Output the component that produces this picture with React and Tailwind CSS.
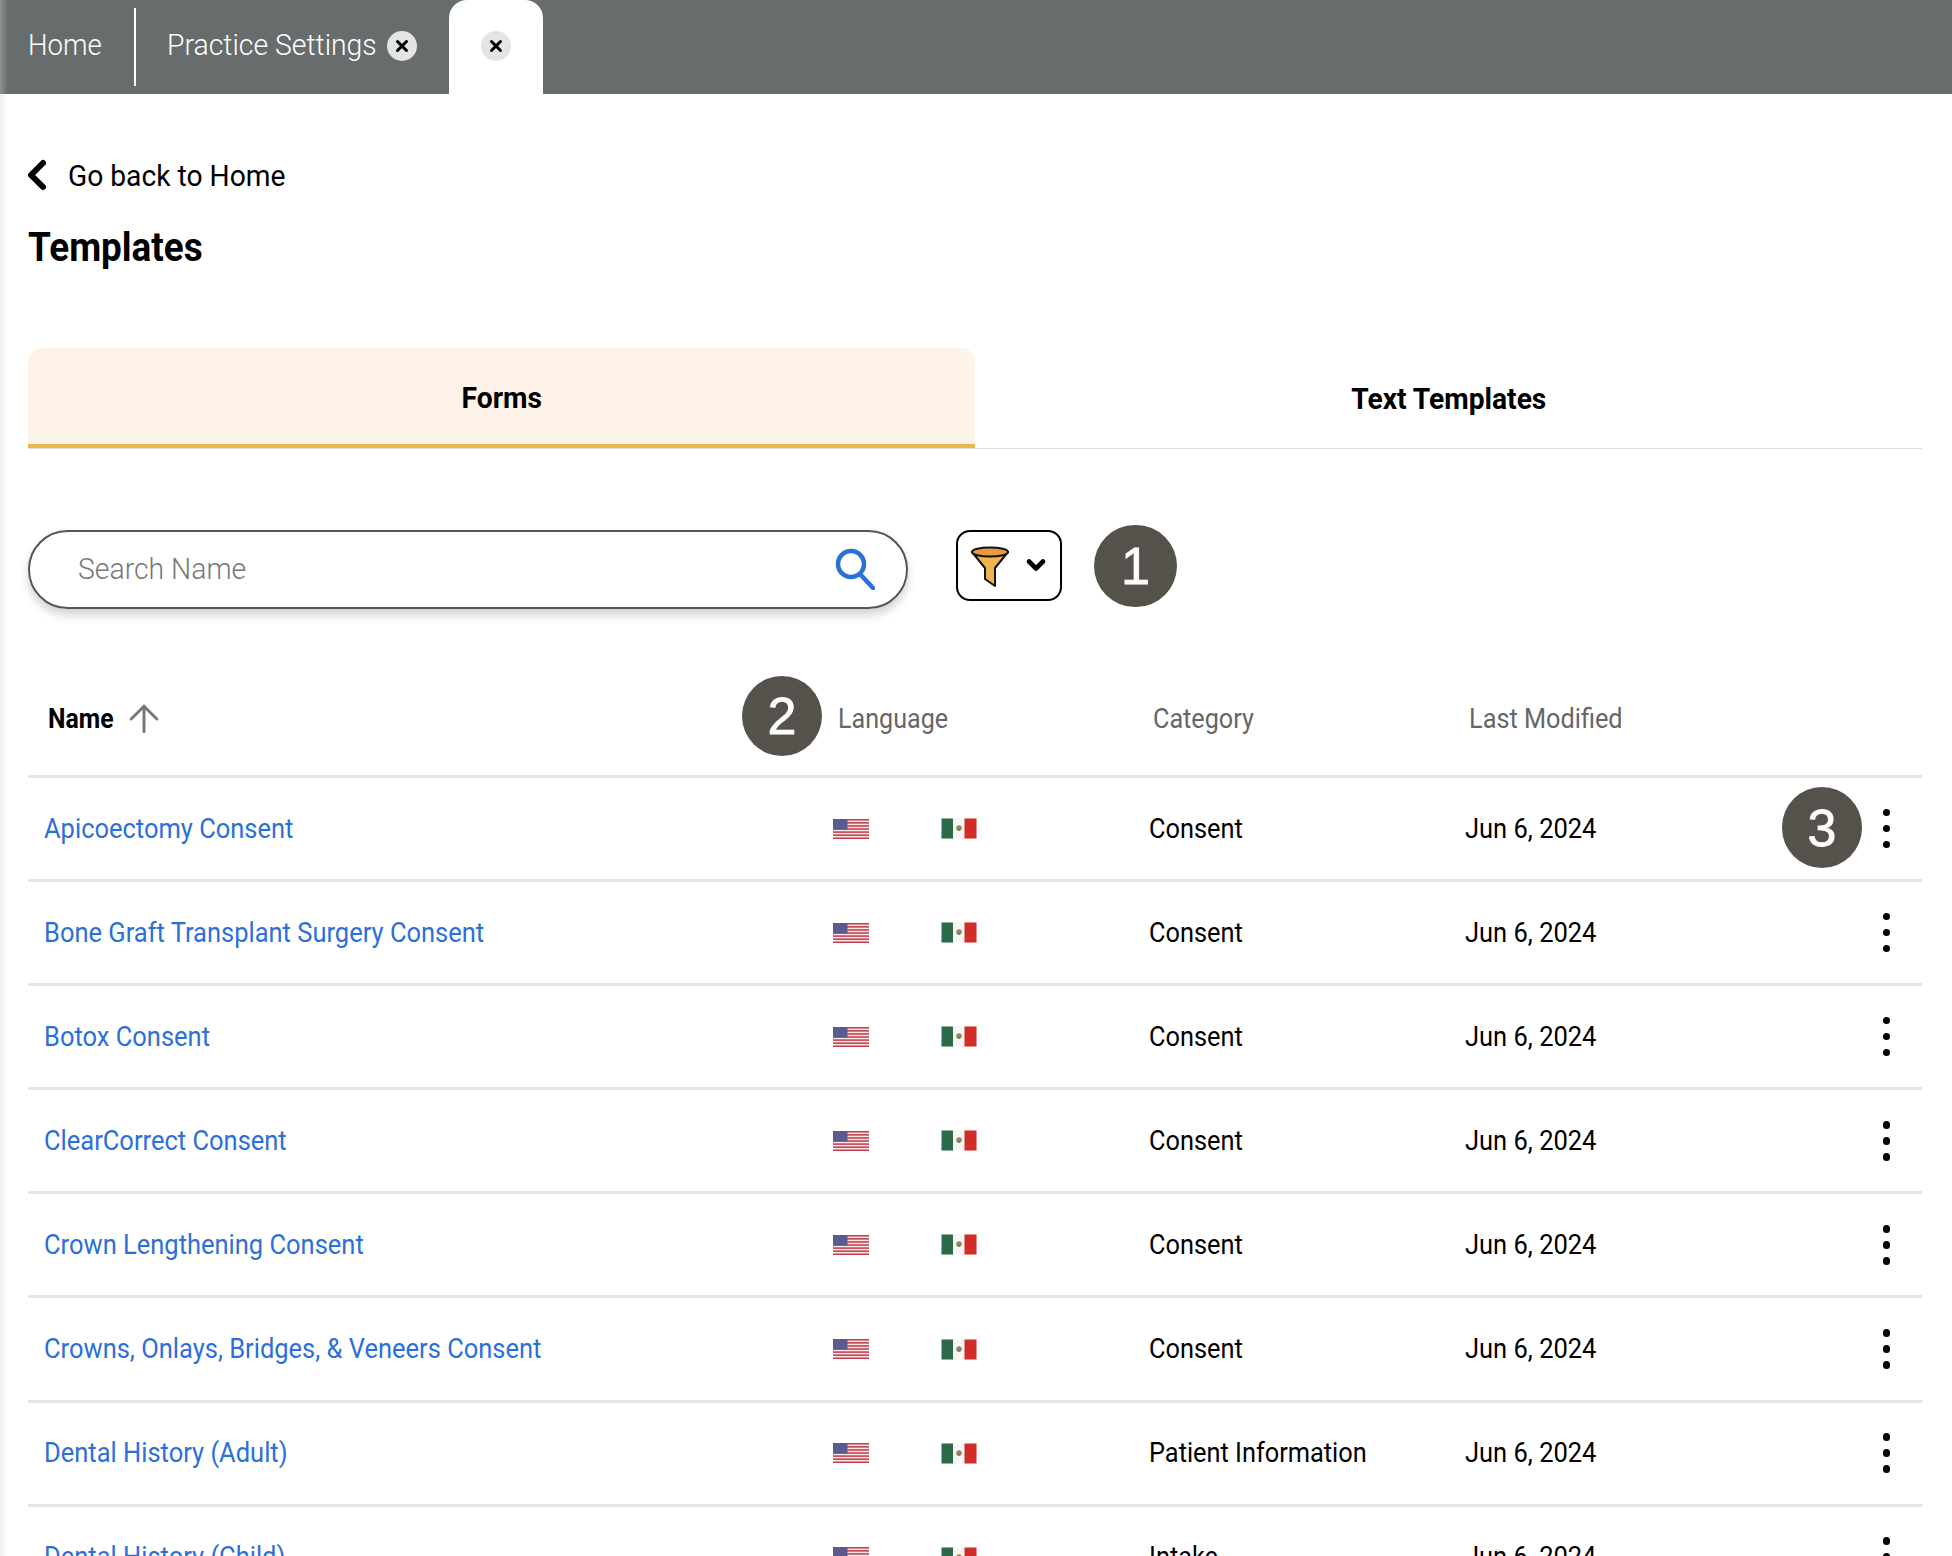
import { ArrowUp, ChevronDown, ChevronLeft, X } from "lucide-react";

const rows = [
  ["Apicoectomy Consent", "Consent"],
  ["Bone Graft Transplant Surgery Consent", "Consent"],
  ["Botox Consent", "Consent"],
  ["ClearCorrect Consent", "Consent"],
  ["Crown Lengthening Consent", "Consent"],
  ["Crowns, Onlays, Bridges, & Veneers Consent", "Consent"],
  ["Dental History (Adult)", "Patient Information"],
  ["Dental History (Child)", "Intake"],
];

const stripes = [0, 1, 2, 3, 4, 5, 6];

function UsFlag() {
  return (
    <svg width="36" height="20" viewBox="0 0 36 20">
      <rect width="36" height="20" fill="#f4e4e6" />
      {stripes.map((s) => (
        <rect key={s} y={s * 3.08} width="36" height="1.54" fill="#c2414f" />
      ))}
      <rect width="14.5" height="10.5" fill="#5a5a90" />
    </svg>
  );
}

function MxFlag() {
  return (
    <svg width="36" height="21" viewBox="0 0 36 21">
      <rect width="36" height="21" fill="#f7f7f7" />
      <rect x="0.5" y="0.5" width="11.5" height="20" fill="#2c6b47" />
      <rect x="23.5" y="0.5" width="12" height="20" fill="#d12c27" />
      <circle cx="18" cy="10" r="2.8" fill="#a8825a" />
      <circle cx="18" cy="11.5" r="1.6" fill="#6f8f5c" />
    </svg>
  );
}

function CloseBadge() {
  return (
    <span className="flex h-[30px] w-[30px] items-center justify-center rounded-full bg-[#e4e4e4]">
      <X size={18} strokeWidth={4} className="text-black" />
    </span>
  );
}

function Badge({ children, className }) {
  return (
    <div
      className={`flex items-center justify-center rounded-full bg-[#55524c] font-['Liberation_Sans',sans-serif] text-[52px] text-white [-webkit-text-stroke:0.8px_white] ${className}`}
    >
      {children}
    </div>
  );
}

export default function App() {
  return (
    <div className="relative h-[1556px] w-[1952px] overflow-hidden bg-white font-['Roboto',sans-serif] text-black">
      {/* top tab bar */}
      <div className="relative flex h-[94px] items-stretch bg-[#676c6c] pl-[28px] text-[30px] font-light text-white">
        <div className="flex w-[106px] items-center pb-[5px]">
          <span className="inline-block origin-left scale-x-[0.92]">Home</span>
        </div>
        <div className="my-[8px] w-[2px] bg-white" />
        <div className="flex w-[313px] items-center pl-[31px]">
          <span className="inline-block w-[220px] origin-left scale-x-[0.945] whitespace-nowrap pb-[5px]">Practice Settings</span>
          <span className="pb-[2px]">
            <CloseBadge />
          </span>
        </div>
        <div className="flex w-[94px] items-center justify-center rounded-t-[18px] bg-white pb-[2px]">
          <CloseBadge />
        </div>
        <div className="absolute inset-y-0 left-0 w-[8px] bg-gradient-to-r from-[#ffffff40] to-transparent" />
      </div>

      <div className="pl-[28px] pr-[30px]">
        <div className="mt-[58px] flex h-[46px] items-center text-[30px]">
          <ChevronLeft size={48} strokeWidth={3} className="ml-[-15px] mr-[7px]" />
          <span className="inline-block origin-left scale-x-[0.94]">Go back to Home</span>
        </div>
        <h1 className="mt-[19px] h-[60px] text-[41px] leading-[60px] font-bold">
          <span className="inline-block origin-left scale-x-[0.9]">Templates</span>
        </h1>

        {/* forms / text templates */}
        <div className="mt-[71px] flex h-[101px] border-b border-[#dddddd] text-[30px] font-bold">
          <div className="flex h-[100px] w-[947px] items-center justify-center rounded-t-[14px] border-b-[4px] border-[#eab64f] bg-[#fdf3e9] pt-[2px]">
            <span className="inline-block scale-x-[0.94]">Forms</span>
          </div>
          <div className="flex h-[100px] w-[947px] items-center justify-center">
            <span className="inline-block scale-x-[0.94]">Text Templates</span>
          </div>
        </div>

        {/* search and filter */}
        <div className="mt-[81px] flex h-[79px] items-start">
          <div className="flex h-[79px] w-[880px] items-center justify-between rounded-full border-2 border-[#555555] pl-[48px] pr-[31px] shadow-[0_6px_10px_rgba(0,0,0,0.18)]">
            <span className="inline-block origin-left scale-x-[0.945] pb-[3px] text-[30px] font-light text-[#777777]">Search Name</span>
            <svg width="40" height="42" viewBox="0 0 40 42" fill="none" stroke="#2b6fdb" strokeWidth="4.5" className="mt-[-2px]">
              <ellipse cx="16" cy="16" rx="13" ry="13" />
              <path d="M25 26 L38 40" strokeLinecap="round" />
            </svg>
          </div>
          <div className="ml-[48px] flex h-[71px] w-[106px] items-center rounded-[14px] border-2 border-black pl-[12px]">
            <svg width="40" height="42" viewBox="0 0 40 42">
              <path d="M2 7 L15 23 V34 L25 41 V23 L38 7 Z" fill="#efb54a" stroke="#111" strokeWidth="2" strokeLinejoin="round" />
              <ellipse cx="20" cy="7" rx="18" ry="4.5" fill="#e89a42" stroke="#111" strokeWidth="2" />
            </svg>
            <ChevronDown size={28} strokeWidth={4} className="ml-[12px] mt-[-2px]" />
          </div>
          <Badge className="ml-[32px] mt-[-5px] h-[82px] w-[83px] shrink-0">1</Badge>
        </div>

        {/* table */}
        <div className="relative mt-[40px]">
          <div className="grid h-[129px] grid-cols-[805px_316px_316px_457px] items-center border-b-[3px] border-[#e5e5e5] pt-[14px] text-[27.5px] text-[#666666]">
            <div className="flex items-center pl-[20px] font-bold text-black">
              <span className="inline-block w-[74px] origin-left scale-x-[0.9]">Name</span>
              <ArrowUp size={44} strokeWidth={1.6} className="text-[#777777]" />
            </div>
            <div className="pl-[5px]">
              <span className="inline-block origin-left scale-x-[0.913]">Language</span>
            </div>
            <div className="pl-[4px]">
              <span className="inline-block origin-left scale-x-[0.916]">Category</span>
            </div>
            <div className="pl-[4px]">
              <span className="inline-block origin-left scale-x-[0.92]">Last Modified</span>
            </div>
          </div>
          <Badge className="absolute left-[714px] top-[27px] h-[80px] w-[80px]">2</Badge>

          {rows.map(([name, category], i) => (
            <div
              key={name}
              className="relative grid h-[104.1px] grid-cols-[805px_316px_316px_457px] items-center border-b-[3px] border-[#e5e5e5] text-[28px]"
            >
              <div className="pl-[16px] text-[#2b6fdb]">
                <span className="inline-block origin-left scale-x-[0.91] whitespace-nowrap">{name}</span>
              </div>
              <div className="flex items-center">
                <UsFlag />
                <span className="ml-[72px]">
                  <MxFlag />
                </span>
              </div>
              <div>
                <span className="inline-block origin-left scale-x-[0.905]">{category}</span>
              </div>
              <div className="flex items-center justify-between pr-[32px]">
                <span className="inline-block origin-left scale-x-[0.91]">Jun 6, 2024</span>
                <div className="flex flex-col gap-[8.5px]">
                  <span className="h-[7.5px] w-[7.5px] rounded-full bg-black" />
                  <span className="h-[7.5px] w-[7.5px] rounded-full bg-black" />
                  <span className="h-[7.5px] w-[7.5px] rounded-full bg-black" />
                </div>
              </div>
              {i === 0 && <Badge className="absolute left-[1754px] top-[9px] h-[81px] w-[80px]">3</Badge>}
            </div>
          ))}
        </div>
      </div>

      {/* soft edge on the left of the window */}
      <div className="absolute inset-y-0 left-0 top-[94px] w-[8px] bg-gradient-to-r from-[#00000010] to-transparent" />
    </div>
  );
}
